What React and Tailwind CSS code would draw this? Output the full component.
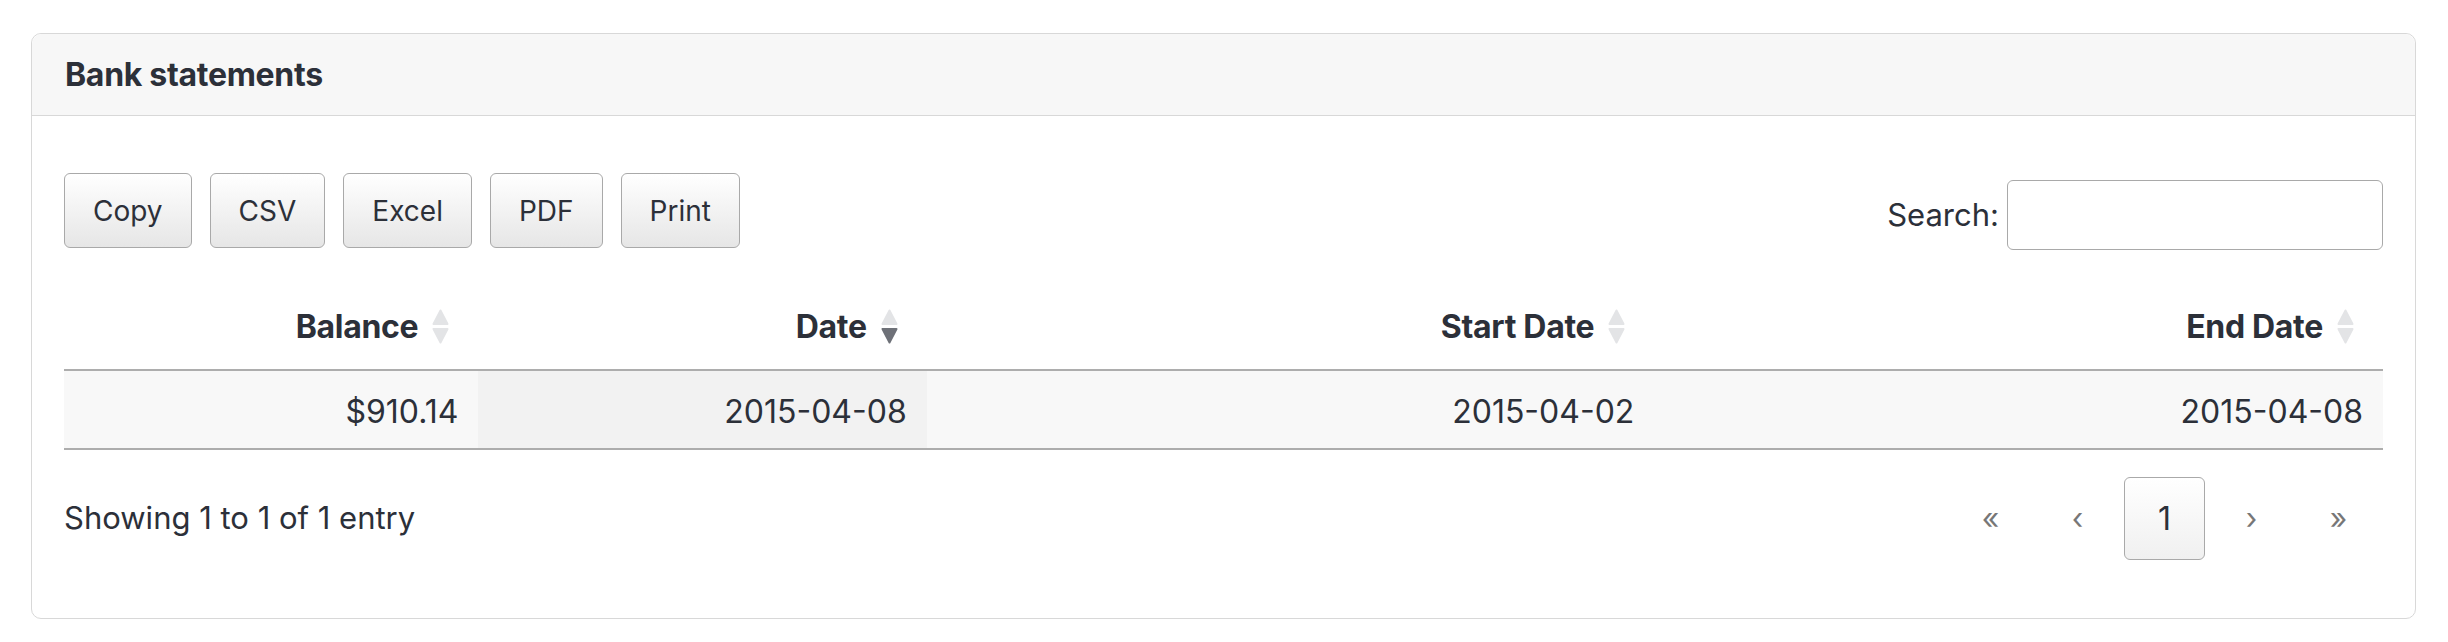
const columns = [
  { label: "Balance", value: "$910.14", width: "w-[414px]", sort: "none" },
  { label: "Date", value: "2015-04-08", width: "w-[448px]", sort: "desc" },
  { label: "Start Date", value: "2015-04-02", width: "w-[727px]", sort: "none" },
  { label: "End Date", value: "2015-04-08", width: "w-[728px]", sort: "none" },
];

function SortIcon({ dir }) {
  return (
    <svg width="17" height="35" viewBox="0 0 17 35" className="shrink-0">
      <path
        d="M8.5 1.5 L15.5 15 L1.5 15 Z"
        fill="#e3e4e6"
        stroke="#e3e4e6"
        strokeWidth="2"
        strokeLinejoin="round"
      />
      <path
        d="M1.5 20 L15.5 20 L8.5 33.5 Z"
        fill={dir === "desc" ? "#6e7178" : "#e3e4e6"}
        stroke={dir === "desc" ? "#6e7178" : "#e3e4e6"}
        strokeWidth="2"
        strokeLinejoin="round"
      />
    </svg>
  );
}

const buttons = ["Copy", "CSV", "Excel", "PDF", "Print"];

export default function App() {
  return (
    <div className="h-[642px] w-full bg-white pl-[31px] pr-[32px] pt-[33px] font-['Inter',sans-serif] text-[#2c3039]">
      <div className="flex h-[586px] flex-col rounded-[10px] border border-[#d8d8d8]">
        <div className="flex h-[82px] items-center rounded-t-[10px] border-b border-[#d8d8d8] bg-[#f7f7f7] px-[33px]">
          <h2 className="text-[32px] font-bold tracking-[-0.3px]">Bank statements</h2>
        </div>

        <div className="flex flex-1 flex-col px-[32px] pt-[57px]">
          <div className="flex items-start justify-between">
            <div className="flex gap-[18px]">
              {buttons.map((b) => (
                <button
                  key={b}
                  className="h-[75px] rounded-[6px] border border-[#a9a9a9] bg-gradient-to-b from-white to-[#e6e6e6] px-[28px] text-[28px] text-[#2c3039]"
                >
                  {b}
                </button>
              ))}
            </div>
            <label className="mt-[7px] flex items-center gap-[8px] text-[31px]">
              Search:
              <input className="h-[70px] w-[376px] rounded-[6px] border border-[#a9a9a9] bg-white outline-none" />
            </label>
          </div>

          <table className="mt-[34px] w-full table-fixed border-collapse">
            <thead>
              <tr className="border-b-2 border-[#adadad]">
                {columns.map((c) => (
                  <th key={c.label} className={`${c.width} h-[86px] p-0 pr-[29px]`}>
                    <div className="flex items-center justify-end gap-[14px] text-[32px] font-bold tracking-[-0.3px]">
                      <span>{c.label}</span>
                      <SortIcon dir={c.sort} />
                    </div>
                  </th>
                ))}
              </tr>
            </thead>
            <tbody>
              <tr className="border-b-2 border-[#adadad] bg-[#f8f8f8]">
                {columns.map((c) => (
                  <td
                    key={c.label}
                    className={`h-[79px] p-0 pr-[20px] pt-[4px] text-right text-[32px] ${
                      c.sort === "desc" ? "bg-[#f2f2f2]" : ""
                    }`}
                  >
                    {c.value}
                  </td>
                ))}
              </tr>
            </tbody>
          </table>

          <div className="mt-[27px] flex items-center justify-between">
            <div className="text-[31px]">Showing 1 to 1 of 1 entry</div>
            <div className="mr-[4px] flex items-center gap-[6px] text-[30px] text-[#777]">
              <span className="flex h-[83px] w-[81px] items-center justify-center">«</span>
              <span className="flex h-[83px] w-[81px] items-center justify-center">‹</span>
              <span className="flex h-[83px] w-[81px] items-center justify-center rounded-[6px] border border-[#a9a9a9] bg-gradient-to-b from-white to-[#f0f0f0] text-[32px] text-[#2c3039]">
                1
              </span>
              <span className="flex h-[83px] w-[81px] items-center justify-center">›</span>
              <span className="flex h-[83px] w-[81px] items-center justify-center">»</span>
            </div>
          </div>
        </div>
      </div>
    </div>
  );
}
